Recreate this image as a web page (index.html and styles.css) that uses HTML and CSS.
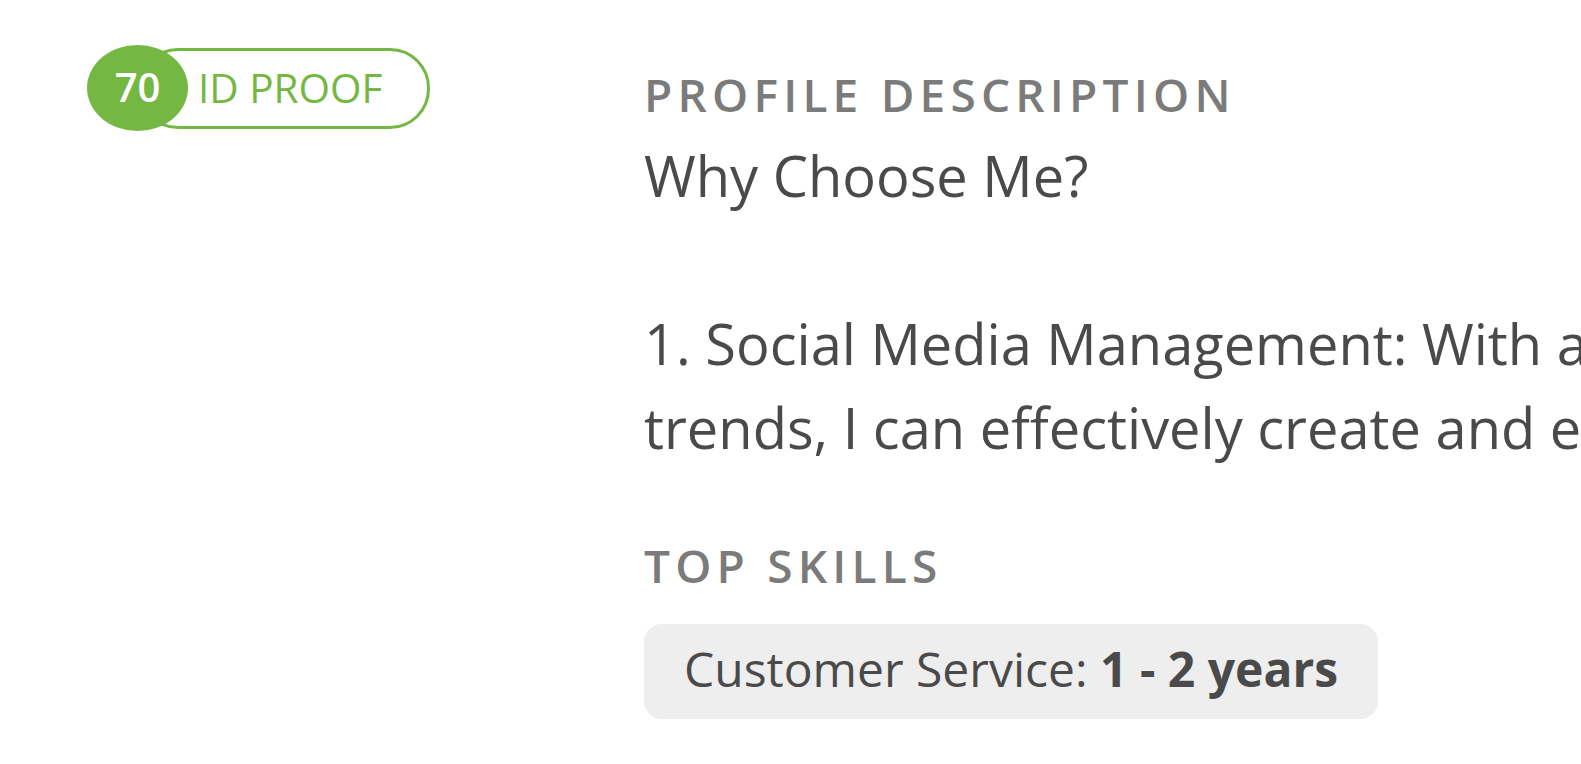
FILE: index.html
```html
<!DOCTYPE html>
<html lang="en">
<head>
    <meta charset="UTF-8">
    <meta name="viewport" content="width=device-width, initial-scale=1.0">
    <title>Profile</title>
    <link rel="stylesheet" href="styles.css">
</head>
<body>
    <main class="profile">
        <aside class="side">
            <div class="badge">
                <span class="badge-score">70</span>
                <span class="badge-label">ID PROOF</span>
            </div>
        </aside>
        <section class="details">
            <h2 class="label">Profile Description</h2>
            <p class="description">Why Choose Me?

1. Social Media Management: With a deep understanding of various social media platforms and the latest
trends, I can effectively create and execute strategies that boost engagement and grow your audience.</p>
            <h2 class="label skills-label">Top Skills</h2>
            <ul class="skills">
                <li class="skill">Customer Service: <b>1 - 2 years</b></li>
            </ul>
        </section>
    </main>
</body>
</html>
```

FILE: styles.css
```css
html {
    font-family: "Open Sans", "Noto Sans", sans-serif;
    color: #4a4a4a;
}
body {
    margin: 0;
    background: #fff;
    overflow: hidden;
}
.profile {
    display: grid;
    grid-template-columns: 557px 1fr;
    padding: 45px 0 0 87px;
}
.badge {
    display: inline-flex;
    align-items: center;
}
.badge-score {
    position: relative;
    z-index: 1;
    display: flex;
    align-items: center;
    justify-content: center;
    width: 101px;
    height: 86px;
    padding-bottom: 3px;
    box-sizing: border-box;
    border-radius: 50%;
    background: #74b843;
    color: #fff;
    font-size: 40px;
    font-weight: 600;
}
.badge-label {
    display: flex;
    align-items: center;
    height: 73px;
    margin-left: -50px;
    padding: 0 44px 2px 57px;
    box-sizing: content-box;
    border: 3px solid #74b843;
    border-radius: 40px;
    color: #74b843;
    font-size: 40.5px;
    font-weight: 500;
}
.details {
    margin-top: 19px;
    min-width: 0;
}
.label {
    margin: 0;
    font-size: 46px;
    line-height: 60px;
    font-weight: 600;
    letter-spacing: 5.2px;
    text-transform: uppercase;
    color: #7b7b7b;
}
.description {
    margin: 9px 0 0;
    font-size: 56px;
    line-height: 84px;
    white-space: pre;
}
.skills-label {
    margin-top: 66px;
}
.skills {
    display: flex;
    list-style: none;
    margin: 29px 0 0;
    padding: 0;
}
.skill {
    padding: 11px 40px 17px;
    border-radius: 18px;
    background: #eee;
    font-size: 48px;
    line-height: 67px;
}
.skill b {
    font-weight: 700;
}
```
